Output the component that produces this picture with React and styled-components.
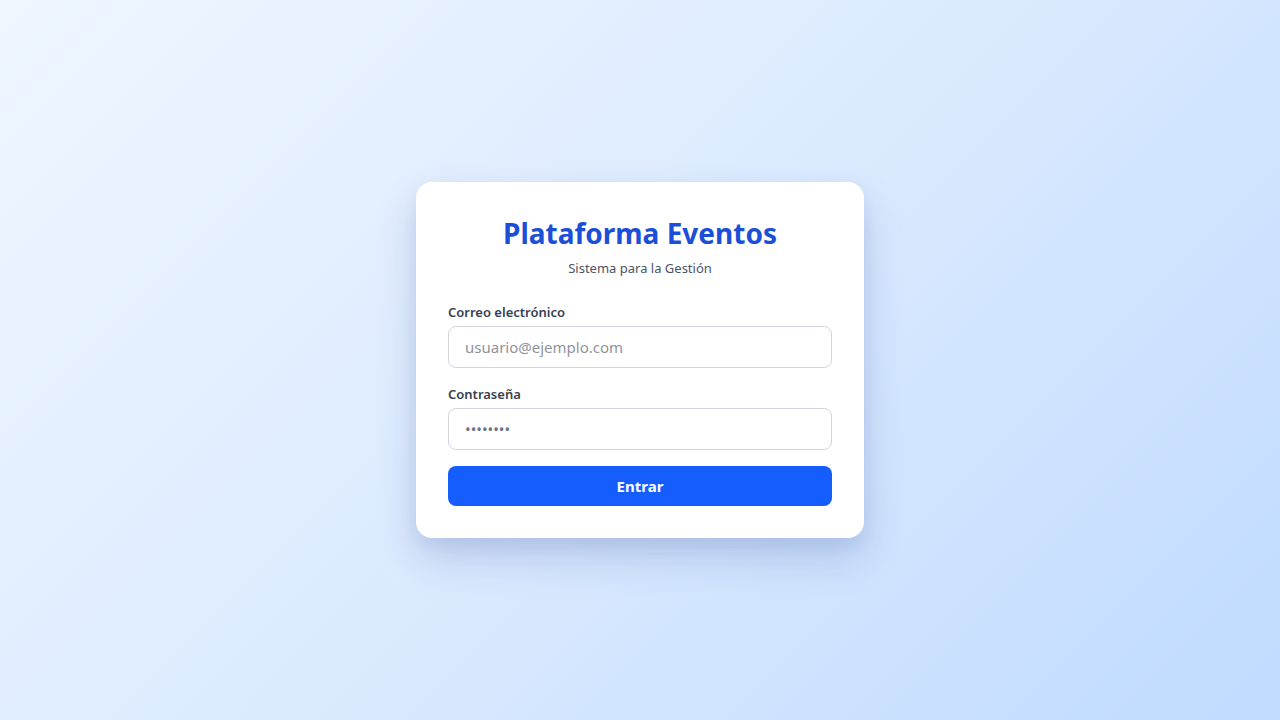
import React from "react";
import styled, { createGlobalStyle } from "styled-components";

const Global = createGlobalStyle`
  html, body { margin: 0; padding: 0; }
  body { font-family: "Noto Sans", "Open Sans", sans-serif; }
  * { box-sizing: border-box; }
`;

const Page = styled.div`
  width: 100%;
  height: 720px;
  display: flex;
  align-items: center;
  justify-content: center;
  background: linear-gradient(135deg, #eff6ff 0%, #dbeafe 50%, #bfdbfe 100%);
`;

const Card = styled.form`
  width: 448px;
  background: #ffffff;
  border-radius: 16px;
  padding: 32px;
  box-shadow: 0 20px 40px rgba(30, 58, 138, 0.18), 0 8px 16px rgba(30, 58, 138, 0.06);
  display: flex;
  flex-direction: column;
`;

const Title = styled.h1`
  margin: 0;
  text-align: center;
  font-size: 28px;
  line-height: 38px;
  font-weight: 700;
  color: #1d4ed8;
`;

const Subtitle = styled.p`
  margin: 7px 0 0;
  text-align: center;
  font-size: 13px;
  line-height: 18px;
  color: #4b5563;
`;

const Field = styled.div`
  display: flex;
  flex-direction: column;
  gap: 5px;
  margin-top: ${(p) => p.$top}px;
`;

const Label = styled.label`
  font-size: 13px;
  line-height: 18px;
  font-weight: 600;
  color: #374151;
`;

const Input = styled.input`
  height: 42px;
  width: 100%;
  border: 1px solid #d1d5db;
  border-radius: 8px;
  padding: 0 16px;
  font-family: inherit;
  font-size: 15px;
  color: #6b7280;
  background: #fff;
  outline: none;
  &::placeholder { color: #8f949b; }
`;

const Button = styled.button`
  margin-top: 16px;
  height: 40px;
  border: none;
  border-radius: 8px;
  background: #155dfc;
  color: #ffffff;
  font-family: inherit;
  font-size: 15px;
  font-weight: 700;
  cursor: pointer;
`;

export default function App() {
  return (
    <>
      <Global />
      <Page>
        <Card onSubmit={(e) => e.preventDefault()}>
          <Title>Plataforma Eventos</Title>
          <Subtitle>Sistema para la Gestión</Subtitle>
          <Field $top={26}>
            <Label htmlFor="email">Correo electrónico</Label>
            <Input id="email" type="email" placeholder="usuario@ejemplo.com" />
          </Field>
          <Field $top={17}>
            <Label htmlFor="pw">Contraseña</Label>
            <Input id="pw" type="password" defaultValue="12345678" />
          </Field>
          <Button type="submit">Entrar</Button>
        </Card>
      </Page>
    </>
  );
}
